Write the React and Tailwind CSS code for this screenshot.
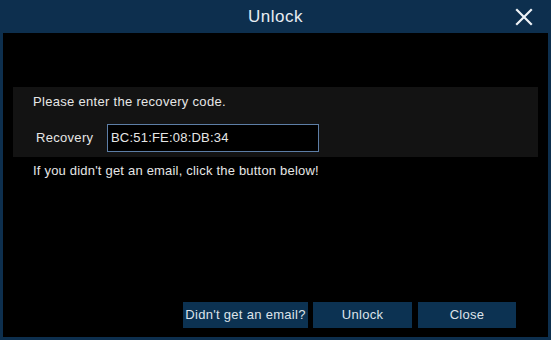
import React from 'react';

const Btn = ({ children, className }) => (
  <button className={`h-[26px] bg-[#0c3252] text-[#dde3ea] text-[13px] tracking-[0.3px] flex items-center justify-center ${className}`}>
    {children}
  </button>
);

const App = () => {
  return (
    <div
      className="w-[551px] h-[340px] bg-[#0d2f4e] flex flex-col px-[3px] pb-[3px] text-[#e6e6e6]"
      style={{ fontFamily: '"Liberation Sans", Arial, sans-serif' }}
    >
      <div className="h-[33px] relative flex items-center justify-center">
        <span className="text-[17px] tracking-[0.5px] text-[#e8edf2]">Unlock</span>
        <svg className="absolute right-[15px] top-[8px]" width="18" height="18" viewBox="0 0 18 18">
          <path d="M2 2 L16 16 M16 2 L2 16" stroke="#eef2f6" strokeWidth="2.2" strokeLinecap="square" />
        </svg>
      </div>
      <div className="flex-1 bg-black flex flex-col">
        <div className="mt-[54px] mx-[10px] h-[70px] bg-[#131313] pl-[20px] pt-[7px] flex flex-col">
          <div className="text-[13px] leading-[16px] tracking-[0.3px]">Please enter the recovery code.</div>
          <div className="mt-[14px] flex items-center">
            <span className="ml-[3px] w-[71px] text-[13px] tracking-[0.3px]">Recovery</span>
            <div className="w-[212px] h-[28px] border border-[#5d7ea6] bg-black flex items-center pl-[3px] text-[13px] tracking-[0.2px]">
              BC:51:FE:08:DB:34
            </div>
          </div>
        </div>
        <div className="mt-[6px] pl-[30px] text-[13px] leading-[16px] tracking-[0.2px]">
          If you didn't get an email, click the button below!
        </div>
        <div className="mt-auto mb-[9px] mr-[32px] flex justify-end">
          <Btn className="w-[125px]">Didn't get an email?</Btn>
          <Btn className="w-[99px] ml-[5px]">Unlock</Btn>
          <Btn className="w-[98px] ml-[6px]">Close</Btn>
        </div>
      </div>
    </div>
  );
};

export default App;
